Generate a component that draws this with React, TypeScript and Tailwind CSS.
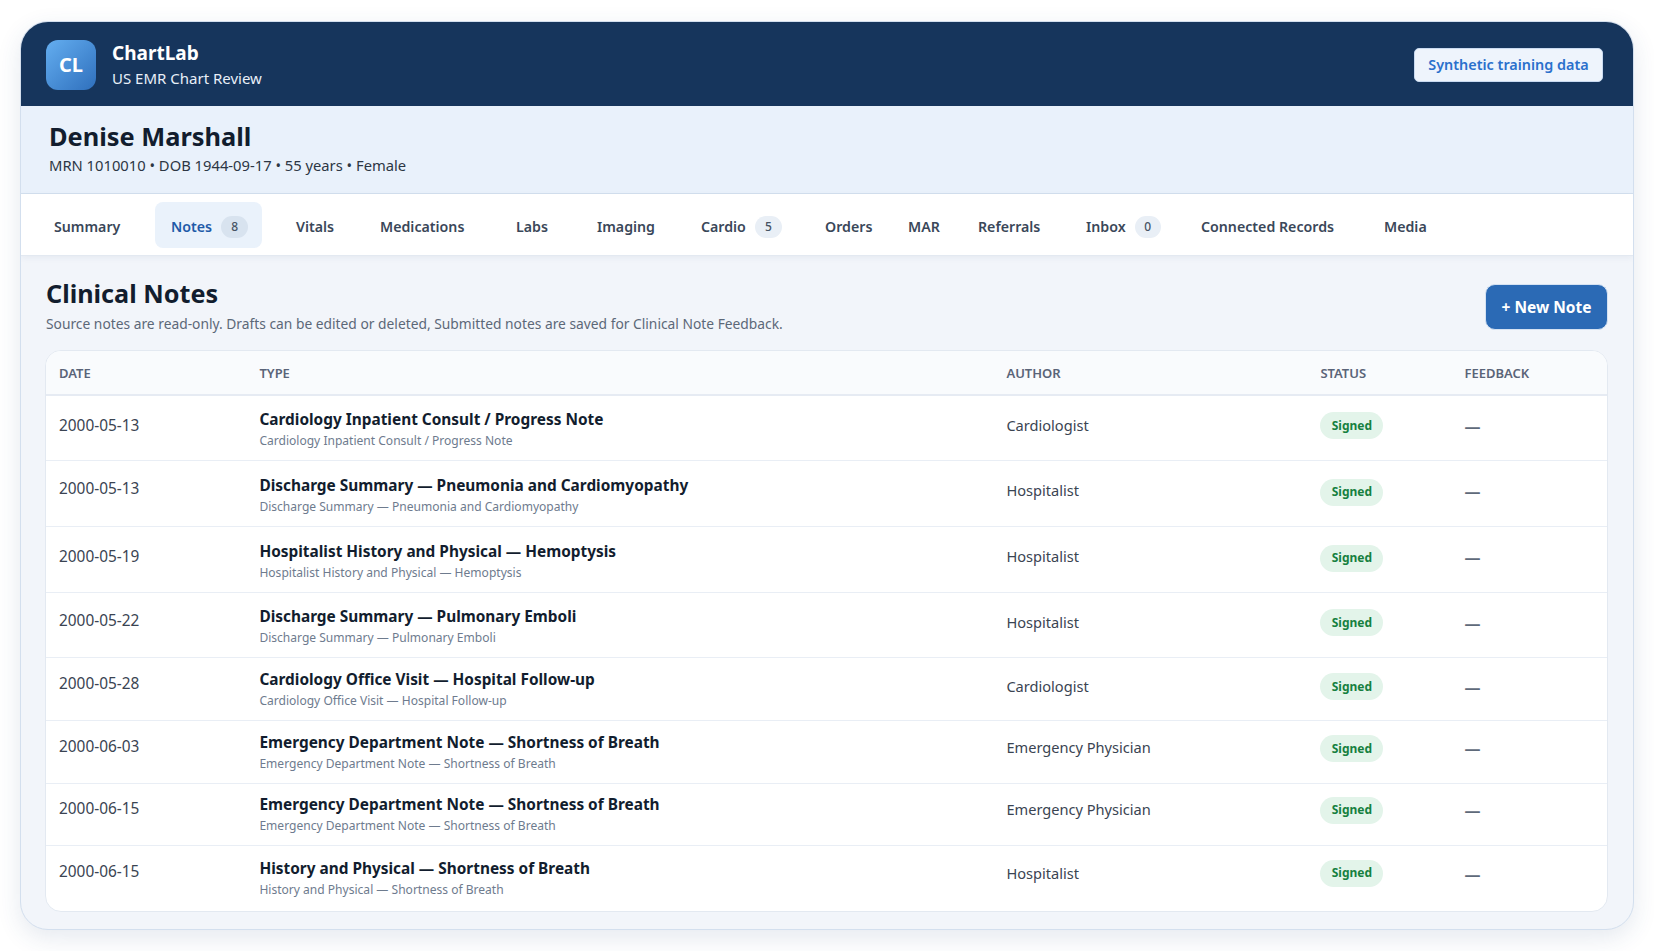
import React from 'react';

type Tab = { label: string; badge?: string; active?: boolean; className: string };

const TABS: Tab[] = [
  { label: 'Summary', className: 'w-[114px] pl-[13px]' },
  { label: 'Notes', badge: '8', active: true, className: 'w-[107px] pl-4 bg-[#eaf2fb] text-[#1f5ba8]' },
  { label: 'Vitals', className: 'w-[84px] pl-[34px]' },
  { label: 'Medications', className: 'w-[136px] pl-[34px]' },
  { label: 'Labs', className: 'w-[80px] pl-[34px]' },
  { label: 'Imaging', className: 'w-[108px] pl-[35px]' },
  { label: 'Cardio', badge: '5', className: 'w-[132px] pl-[31px]' },
  { label: 'Orders', className: 'w-[62px] pl-[23px]' },
  { label: 'MAR', className: 'w-[79px] pl-[44px]' },
  { label: 'Referrals', className: 'w-[97px] pl-[35px]' },
  { label: 'Inbox', badge: '0', className: 'w-[121px] pl-[46px]' },
  { label: 'Connected Records', className: 'w-[185px] pl-[40px]' },
  { label: 'Media', className: 'pl-[38px]' },
];

type Note = {
  date: string;
  title: string;
  author: string;
  height: string;
  dateShift: string;
  titleShift: string;
  authorShift: string;
  statusShift: string;
};

const NOTES: Note[] = [
  { date: '2000-05-13', title: 'Cardiology Inpatient Consult / Progress Note', author: 'Cardiologist', height: 'h-[65px]', dateShift: 'pb-[4px]', titleShift: 'pt-[2px]', authorShift: 'pb-[5px]', statusShift: 'pb-[5px]' },
  { date: '2000-05-13', title: 'Discharge Summary — Pneumonia and Cardiomyopathy', author: 'Hospitalist', height: 'h-[66px]', dateShift: 'pb-[10px]', titleShift: 'pt-[3px]', authorShift: 'pb-[5px]', statusShift: 'pb-[3px]' },
  { date: '2000-05-19', title: 'Hospitalist History and Physical — Hemoptysis', author: 'Hospitalist', height: 'h-[66px]', dateShift: 'pb-[6px]', titleShift: 'pt-[3px]', authorShift: 'pb-[5px]', statusShift: 'pb-[3px]' },
  { date: '2000-05-22', title: 'Discharge Summary — Pulmonary Emboli', author: 'Hospitalist', height: 'h-[65px]', dateShift: 'pb-[8px]', titleShift: 'pt-[3px]', authorShift: 'pb-[5px]', statusShift: 'pb-[5px]' },
  { date: '2000-05-28', title: 'Cardiology Office Visit — Hospital Follow-up', author: 'Cardiologist', height: 'h-[63px]', dateShift: 'pb-[10px]', titleShift: 'pt-[1px]', authorShift: 'pb-[5px]', statusShift: 'pb-[5px]' },
  { date: '2000-06-03', title: 'Emergency Department Note — Shortness of Breath', author: 'Emergency Physician', height: 'h-[63px]', dateShift: 'pb-[10px]', titleShift: 'pt-0', authorShift: 'pb-[9px]', statusShift: 'pb-[7px]' },
  { date: '2000-06-15', title: 'Emergency Department Note — Shortness of Breath', author: 'Emergency Physician', height: 'h-[62px]', dateShift: 'pb-[12px]', titleShift: 'pt-0', authorShift: 'pb-[9px]', statusShift: 'pb-[9px]' },
  { date: '2000-06-15', title: 'History and Physical — Shortness of Breath', author: 'Hospitalist', height: 'h-[65px]', dateShift: 'pb-[14px]', titleShift: 'pt-0', authorShift: 'pb-[9px]', statusShift: 'pb-[11px]' },
];

const GRID = 'grid grid-cols-[200.4px_747px_314px_144px_1fr] pl-[13px]';

const App: React.FC = () => {
  return (
    <div className="h-[951px] w-full overflow-hidden bg-white pt-[21px] pl-5 font-['Noto_Sans',sans-serif]">
      <div className="h-[909px] w-[1614px] overflow-hidden rounded-[28px] border border-[#d3dfee] bg-[#f2f5fa] shadow-[0_8px_24px_rgba(40,70,120,0.12)]">
        <header className="flex h-[84px] items-center justify-between bg-[#16355c] pl-[25px] pr-[30px] pt-[2px]">
          <div className="flex items-center gap-[16px]">
            <div className="flex h-[50px] w-[50px] items-center justify-center rounded-xl bg-gradient-to-br from-[#64aef0] to-[#2f70bd] text-[20px] font-bold text-white">
              CL
            </div>
            <div className="pt-[2px]">
              <div className="text-[19px] font-bold leading-[25px] text-white">ChartLab</div>
              <div className="text-[15px] leading-[25px] text-[#e8eff8]">US EMR Chart Review</div>
            </div>
          </div>
          <div className="flex h-[34px] w-[189px] items-center justify-center rounded-[5px] border border-[#c9daf0] bg-[#eef4fc] text-[14.4px] font-semibold text-[#2a70cc]">
            Synthetic training data
          </div>
        </header>

        <div className="h-[88px] border-b border-[#d3e0ee] bg-[#e9f1fb] pl-[28px] pt-[14px]">
          <h1 className="text-[25.4px] font-bold leading-8 text-[#121d2e]">Denise Marshall</h1>
          <p className="mt-[3px] text-[14.75px] leading-5 text-[#2c3644]">MRN 1010010 • DOB 1944-09-17 • 55 years • Female</p>
        </div>

        <nav className="flex h-[62px] items-center border-b border-[#e3e9f1] bg-white pl-[20px] text-[14.2px] font-semibold text-[#3a4759] shadow-[0_2px_6px_rgba(40,70,120,0.06)]">
          {TABS.map((tab) => (
            <div key={tab.label} className={`flex h-[46px] items-center gap-[9px] rounded-lg pt-[5px] ${tab.className}`}>
              {tab.label}
              {tab.badge && (
                <span className={`flex h-[22px] w-[27px] items-center justify-center rounded-full text-xs font-medium text-[#465364] ${tab.active ? 'bg-[#d8e3ef]' : 'bg-[#e9eff6]'}`}>
                  {tab.badge}
                </span>
              )}
            </div>
          ))}
        </nav>

        <main className="pl-[24px] pr-[25px] pt-[21px]">
          <div className="flex items-start justify-between pl-px">
            <div>
              <h2 className="text-[25.2px] font-bold leading-8 text-[#121d2e]">Clinical Notes</h2>
              <p className="mt-[5px] text-[13.8px] leading-5 text-[#5c6878]">
                Source notes are read-only. Drafts can be edited or deleted, Submitted notes are saved for Clinical Note Feedback.
              </p>
            </div>
            <button className="mt-[7px] h-[46px] w-[123px] rounded-[10px] border border-[#d5e2f2] bg-[#2b6ab5] pt-[2px] text-[15.5px] font-bold text-white">
              + New Note
            </button>
          </div>

          <div className="mt-[16px] overflow-hidden rounded-2xl border border-[#e3e9f1] bg-white">
            <div className={`${GRID} h-[45px] items-center border-b-2 border-[#e6ebf3] bg-[#f9fbfd] pt-[2px] text-[13px] font-semibold text-[#5a6478]`}>
              <div>DATE</div>
              <div>TYPE</div>
              <div>AUTHOR</div>
              <div>STATUS</div>
              <div>FEEDBACK</div>
            </div>
            {NOTES.map((note, i) => (
              <div key={i} className={`${GRID} ${note.height} items-center border-b border-[#e9eef5] last:border-b-0`}>
                <div className={`text-[15.4px] text-[#3a4452] ${note.dateShift}`}>{note.date}</div>
                <div className={note.titleShift}>
                  <div className="text-[15.4px] font-bold leading-[22px] text-[#121d2e]">{note.title}</div>
                  <div className="text-[12.05px] leading-[19px] text-[#6e7b8e]">{note.title}</div>
                </div>
                <div className={`text-[14.6px] text-[#3a4452] ${note.authorShift}`}>{note.author}</div>
                <div className={note.statusShift}>
                  <span className="inline-flex h-[27px] w-[63px] items-center justify-center rounded-full bg-[#e3f4ea] text-xs font-bold text-[#16803f]">
                    Signed
                  </span>
                </div>
                <div className={`text-[16px] font-bold text-[#5f6a7a] ${note.authorShift}`}>—</div>
              </div>
            ))}
          </div>
        </main>
      </div>
    </div>
  );
};

export default App;
